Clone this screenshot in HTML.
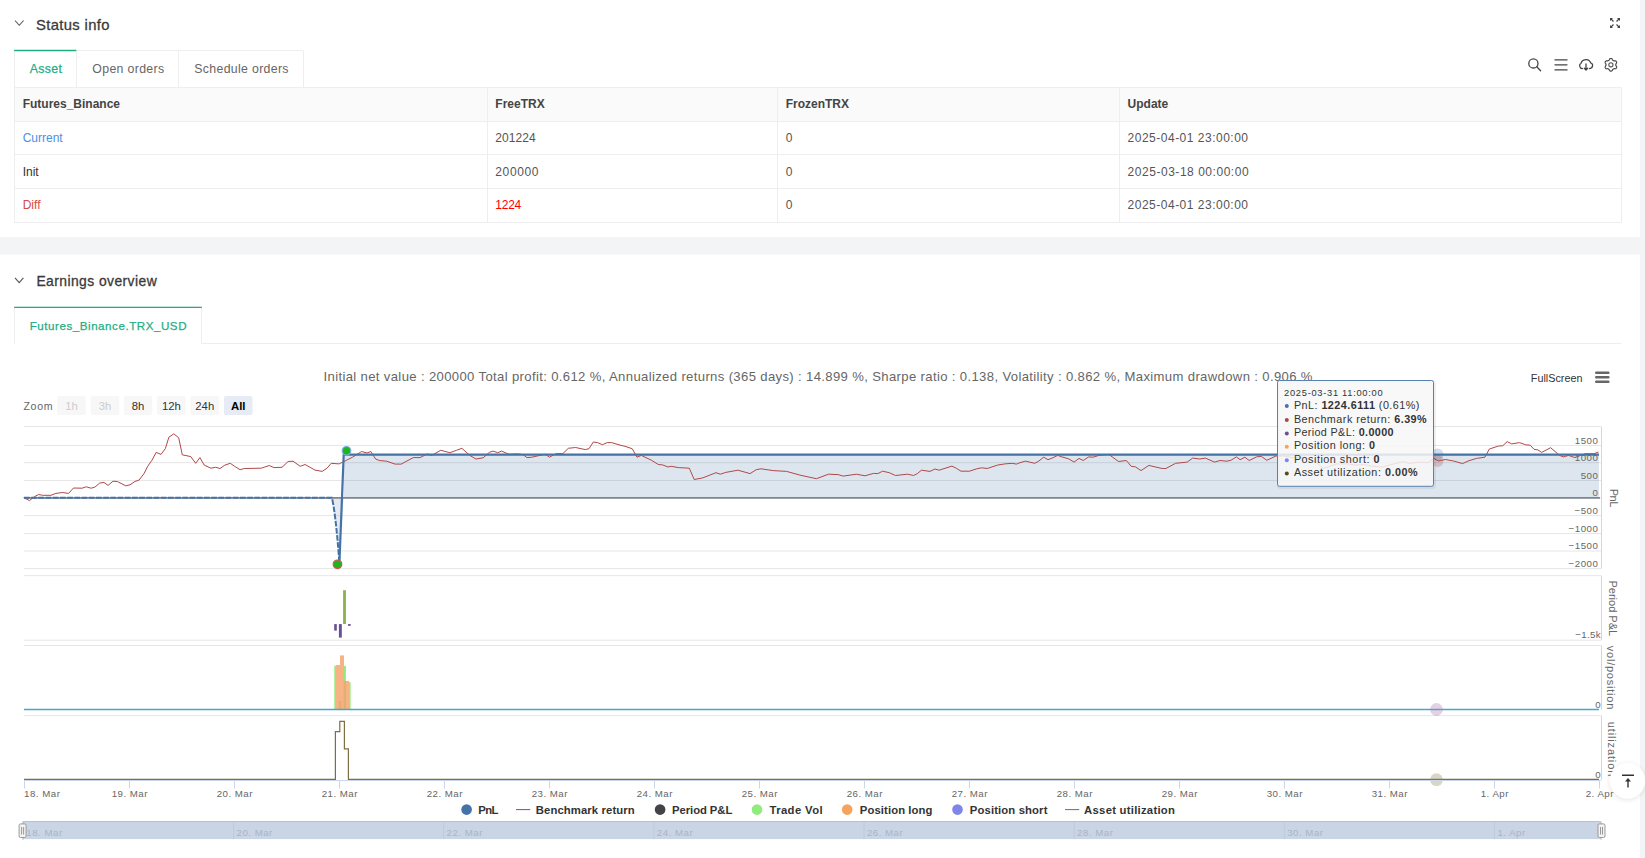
<!DOCTYPE html>
<html><head><meta charset="utf-8"><title>Status info</title>
<style>html,body{margin:0;padding:0;background:#fff;overflow:hidden} svg{display:block;font-family:"Liberation Sans", sans-serif}</style></head>
<body><svg width="1645" height="858" viewBox="0 0 1645 858">
<defs><filter id="sh" x="-50%" y="-50%" width="200%" height="200%"><feDropShadow dx="0" dy="1" stdDeviation="2.5" flood-color="#000" flood-opacity="0.12"/></filter></defs>
<rect x="0" y="0" width="1645" height="858" fill="#fff"/>
<rect x="1640" y="0" width="5" height="858" fill="#f3f4f6"/>
<rect x="0" y="237" width="1640" height="17.5" fill="#f3f4f6"/>
<path d="M15 20.5 L19.3 25.3 L23.6 20.5" fill="none" stroke="#555" stroke-width="1.1"/>
<text x="36" y="30.1" font-size="14.8" fill="#3a3a3a" font-weight="normal" text-anchor="start" textLength="73.5" lengthAdjust="spacing" stroke="#3a3a3a" stroke-width="0.3">Status info</text>
<g stroke="#444" stroke-width="1.2" fill="none"><path d="M1610.5 18.5 L1613.5 21.5 M1619.5 18.5 L1616.5 21.5 M1610.5 27.5 L1613.5 24.5 M1619.5 27.5 L1616.5 24.5"/></g>
<g fill="#444"><path d="M1610 18 L1613 18 L1610 21Z M1620 18 L1617 18 L1620 21Z M1610 28 L1613 28 L1610 25Z M1620 28 L1617 28 L1620 25Z"/></g>
<path d="M14.5 87 V50.5 H303.5 V87 M76.5 50.5 V87 M178.5 50.5 V87" fill="none" stroke="#eeeeee" stroke-width="1"/>
<rect x="14" y="49.8" width="62.5" height="1.4" rx="0.7" fill="#1fae84"/>
<text x="29.8" y="72.7" font-size="12.3" fill="#1fae84" font-weight="normal" text-anchor="start" textLength="32" lengthAdjust="spacing" stroke="#1fae84" stroke-width="0.25">Asset</text>
<text x="92.3" y="72.7" font-size="12.3" fill="#666" font-weight="normal" text-anchor="start" textLength="71.8" lengthAdjust="spacing" >Open orders</text>
<text x="194.3" y="72.7" font-size="12.3" fill="#666" font-weight="normal" text-anchor="start" textLength="94.2" lengthAdjust="spacing" >Schedule orders</text>
<g stroke="#444" stroke-width="1.3" fill="none" stroke-linecap="round"><circle cx="1533.4" cy="63.4" r="4.6"/><path d="M1536.8 66.8 L1540.6 70.8"/><path d="M1555 59.9 H1567 M1555 64.8 H1567 M1555 69.9 H1567"/><path d="M1582.5 68.6 C1579.5 68.6 1578.6 64.5 1581 63.2 C1582 60.2 1584.5 59.6 1586.3 59.6 C1588.5 59.6 1590 61 1590.8 63 C1593.5 63.8 1593.2 68 1589.6 68.6"/><path d="M1586 64 V70 M1584.3 68.3 L1586 70 L1587.7 68.3"/></g>
<path d="M1615.75 64.80 L1615.77 65.05 L1615.81 65.32 L1615.89 65.59 L1616.02 65.89 L1616.31 66.25 L1616.58 66.65 L1616.64 67.00 L1616.62 67.35 L1616.54 67.67 L1616.40 67.97 L1616.21 68.25 L1615.96 68.48 L1615.68 68.67 L1615.34 68.80 L1614.86 68.76 L1614.40 68.69 L1614.08 68.73 L1613.80 68.80 L1613.55 68.89 L1613.33 69.00 L1613.11 69.14 L1612.91 69.31 L1612.71 69.52 L1612.52 69.77 L1612.35 70.21 L1612.14 70.64 L1611.86 70.87 L1611.55 71.03 L1611.23 71.12 L1610.90 71.15 L1610.57 71.12 L1610.25 71.03 L1609.94 70.87 L1609.66 70.64 L1609.45 70.21 L1609.28 69.77 L1609.09 69.52 L1608.89 69.31 L1608.69 69.14 L1608.48 69.00 L1608.25 68.89 L1608.00 68.80 L1607.72 68.73 L1607.40 68.69 L1606.94 68.76 L1606.46 68.80 L1606.12 68.67 L1605.84 68.48 L1605.59 68.25 L1605.40 67.97 L1605.26 67.67 L1605.18 67.35 L1605.16 67.00 L1605.22 66.65 L1605.49 66.25 L1605.78 65.89 L1605.91 65.59 L1605.99 65.32 L1606.03 65.05 L1606.05 64.80 L1606.03 64.55 L1605.99 64.28 L1605.91 64.01 L1605.78 63.71 L1605.49 63.35 L1605.22 62.95 L1605.16 62.60 L1605.18 62.25 L1605.26 61.93 L1605.40 61.62 L1605.59 61.35 L1605.84 61.12 L1606.12 60.93 L1606.46 60.80 L1606.94 60.84 L1607.40 60.91 L1607.72 60.87 L1608.00 60.80 L1608.25 60.71 L1608.48 60.60 L1608.69 60.46 L1608.89 60.29 L1609.09 60.08 L1609.28 59.83 L1609.45 59.39 L1609.66 58.96 L1609.94 58.73 L1610.25 58.57 L1610.57 58.48 L1610.90 58.45 L1611.23 58.48 L1611.55 58.57 L1611.86 58.73 L1612.14 58.96 L1612.35 59.39 L1612.52 59.83 L1612.71 60.08 L1612.91 60.29 L1613.11 60.46 L1613.33 60.60 L1613.55 60.71 L1613.80 60.80 L1614.08 60.87 L1614.40 60.91 L1614.86 60.84 L1615.34 60.80 L1615.68 60.93 L1615.96 61.12 L1616.21 61.35 L1616.40 61.62 L1616.54 61.93 L1616.62 62.25 L1616.64 62.60 L1616.58 62.95 L1616.31 63.35 L1616.02 63.71 L1615.89 64.01 L1615.81 64.28 L1615.77 64.55Z" fill="none" stroke="#444" stroke-width="1.15" stroke-linejoin="round"/>
<circle cx="1610.9" cy="64.8" r="2.1" fill="none" stroke="#555" stroke-width="1.1"/>
<rect x="14.5" y="87.5" width="1607" height="34" fill="#fafafa"/>
<g stroke="#eeeeee" stroke-width="1" fill="none"><rect x="14.5" y="87.5" width="1607" height="135"/><path d="M14.5 121.5 H1621.5 M14.5 154.5 H1621.5 M14.5 188.5 H1621.5 M487.5 87.5 V222.5 M777.5 87.5 V222.5 M1119.5 87.5 V222.5"/></g>
<text x="22.7" y="108.2" font-size="12" fill="#444" font-weight="bold" text-anchor="start" >Futures_Binance</text>
<text x="495.3" y="108.2" font-size="12" fill="#444" font-weight="bold" text-anchor="start" >FreeTRX</text>
<text x="785.7" y="108.2" font-size="12" fill="#444" font-weight="bold" text-anchor="start" >FrozenTRX</text>
<text x="1127.6" y="108.2" font-size="12" fill="#444" font-weight="bold" text-anchor="start" >Update</text>
<text x="22.7" y="142.2" font-size="12" fill="#4a90e2" font-weight="normal" text-anchor="start" >Current</text>
<text x="495.3" y="142.2" font-size="12" fill="#555" font-weight="normal" text-anchor="start" textLength="40.4" lengthAdjust="spacing" >201224</text>
<text x="785.7" y="142.2" font-size="12" fill="#555" font-weight="normal" text-anchor="start" >0</text>
<text x="1127.6" y="142.2" font-size="12" fill="#555" font-weight="normal" text-anchor="start" textLength="120.4" lengthAdjust="spacing" >2025-04-01 23:00:00</text>
<text x="22.7" y="175.8" font-size="12" fill="#333" font-weight="normal" text-anchor="start" >Init</text>
<text x="495.3" y="175.8" font-size="12" fill="#555" font-weight="normal" text-anchor="start" textLength="43.2" lengthAdjust="spacing" >200000</text>
<text x="785.7" y="175.8" font-size="12" fill="#555" font-weight="normal" text-anchor="start" >0</text>
<text x="1127.6" y="175.8" font-size="12" fill="#555" font-weight="normal" text-anchor="start" textLength="121.0" lengthAdjust="spacing" >2025-03-18 00:00:00</text>
<text x="22.7" y="208.9" font-size="12" fill="#d64b40" font-weight="normal" text-anchor="start" >Diff</text>
<text x="495.3" y="208.9" font-size="12" fill="#ff0000" font-weight="normal" text-anchor="start" textLength="26.0" lengthAdjust="spacing" >1224</text>
<text x="785.7" y="208.9" font-size="12" fill="#555" font-weight="normal" text-anchor="start" >0</text>
<text x="1127.6" y="208.9" font-size="12" fill="#555" font-weight="normal" text-anchor="start" textLength="120.4" lengthAdjust="spacing" >2025-04-01 23:00:00</text>
<path d="M15 277.8 L19.2 282.6 L23.4 277.8" fill="none" stroke="#555" stroke-width="1.1"/>
<text x="36.4" y="285.7" font-size="13.9" fill="#3a3a3a" font-weight="normal" text-anchor="start" textLength="120.3" lengthAdjust="spacing" stroke="#3a3a3a" stroke-width="0.3">Earnings overview</text>
<path d="M14.5 343.5 V307 H201.5 V343.5" fill="none" stroke="#eeeeee"/>
<path d="M201.5 343.5 H1621.5" fill="none" stroke="#eeeeee"/>
<rect x="14" y="306.7" width="188" height="1.4" rx="0.7" fill="#1fae84"/>
<text x="29.7" y="329.5" font-size="11.6" fill="#1fae84" font-weight="normal" text-anchor="start" textLength="156.8" lengthAdjust="spacing" stroke="#1fae84" stroke-width="0.25">Futures_Binance.TRX_USD</text>
<text x="818" y="381.2" font-size="13.1" fill="#666" font-weight="normal" text-anchor="middle" textLength="989" lengthAdjust="spacing" >Initial net value : 200000 Total profit: 0.612 %, Annualized returns (365 days) : 14.899 %, Sharpe ratio : 0.138, Volatility : 0.862 %, Maximum drawdown : 0.906 %</text>
<text x="1530.8" y="381.9" font-size="10.8" fill="#333" font-weight="normal" text-anchor="start" >FullScreen</text>
<path d="M1596.2 372.8 H1608.4 M1596.2 377.3 H1608.4 M1596.2 381.7 H1608.4" stroke="#666" stroke-width="2.4" stroke-linecap="round"/>
<text x="23.4" y="409.8" font-size="10.6" fill="#666" font-weight="normal" text-anchor="start" textLength="29.2" lengthAdjust="spacing" >Zoom</text>
<rect x="57.2" y="396" width="28.5" height="19" rx="2" fill="#f7f7f7"/>
<text x="71.45" y="409.8" font-size="11.3" fill="#ccc" font-weight="normal" text-anchor="middle" >1h</text>
<rect x="90.7" y="396" width="28.5" height="19" rx="2" fill="#f7f7f7"/>
<text x="104.95" y="409.8" font-size="11.3" fill="#ccc" font-weight="normal" text-anchor="middle" >3h</text>
<rect x="123.8" y="396" width="28.5" height="19" rx="2" fill="#f7f7f7"/>
<text x="138.05" y="409.8" font-size="11.3" fill="#333" font-weight="normal" text-anchor="middle" >8h</text>
<rect x="157.1" y="396" width="28.5" height="19" rx="2" fill="#f7f7f7"/>
<text x="171.35" y="409.8" font-size="11.3" fill="#333" font-weight="normal" text-anchor="middle" >12h</text>
<rect x="190.5" y="396" width="28.5" height="19" rx="2" fill="#f7f7f7"/>
<text x="204.75" y="409.8" font-size="11.3" fill="#333" font-weight="normal" text-anchor="middle" >24h</text>
<rect x="224" y="396" width="28.5" height="19" rx="2" fill="#e6ebf5"/>
<text x="238.25" y="409.8" font-size="11.3" fill="#000" font-weight="bold" text-anchor="middle" >All</text>
<path d="M24 426.5 H1601" stroke="#e6e6e6" stroke-width="1"/>
<path d="M24 445.5 H1601" stroke="#e6e6e6" stroke-width="1"/>
<path d="M24 462.7 H1601" stroke="#e6e6e6" stroke-width="1"/>
<path d="M24 480.5 H1601" stroke="#e6e6e6" stroke-width="1"/>
<path d="M24 497.8 H1601" stroke="#e6e6e6" stroke-width="1"/>
<path d="M24 515.6 H1601" stroke="#e6e6e6" stroke-width="1"/>
<path d="M24 533.6 H1601" stroke="#e6e6e6" stroke-width="1"/>
<path d="M24 551.0 H1601" stroke="#e6e6e6" stroke-width="1"/>
<path d="M24 568.6 H1601" stroke="#e6e6e6" stroke-width="1"/>
<path d="M24 575.7 H1601" stroke="#e6e6e6" stroke-width="1"/>
<path d="M24 640.2 H1601" stroke="#e6e6e6" stroke-width="1"/>
<path d="M24 645.5 H1601" stroke="#e6e6e6" stroke-width="1"/>
<path d="M24 715.6 H1601" stroke="#e6e6e6" stroke-width="1"/>
<path d="M1601.5 426.8 V568.5" stroke="#ccd6eb" stroke-width="1"/>
<path d="M1601.5 575.7 V640.2" stroke="#ccd6eb" stroke-width="1"/>
<path d="M1601.5 645.5 V709.5" stroke="#ccd6eb" stroke-width="1"/>
<path d="M1601.5 715.6 V779.6" stroke="#ccd6eb" stroke-width="1"/>
<path d="M343.7 497.8 L343.7 454.6 L1599 454.6 L1599 497.8 Z" fill="#4572a7" fill-opacity="0.18"/>
<path d="M331.8 497.8 C334 505 337 530 339.2 560.7 L343.7 497.8 Z" fill="#4572a7" fill-opacity="0.15"/>
<path d="M24 497.90000000000003 H1600" stroke="#7f8690" stroke-width="1.7"/>
<path d="M23.6 497.7 L29.5 500.6 L34.6 496.5 L38.8 494.5 L42.5 495.3 L51.0 495.3 L55.9 493.4 L62.6 492.5 L68.6 493.4 L73.5 488.0 L82.0 488.2 L86.3 486.8 L91.1 488.2 L94.8 487.2 L99.6 483.1 L103.9 482.4 L108.1 485.4 L113.0 481.2 L117.3 481.5 L125.8 485.8 L130.0 484.8 L134.9 481.5 L139.1 480.1 L144.0 473.6 L147.7 466.3 L151.9 460.3 L156.2 452.4 L161.0 454.4 L165.3 448.7 L168.9 437.2 L173.8 433.8 L178.7 437.8 L182.3 454.8 L190.8 456.6 L195.7 463.3 L199.9 457.6 L204.2 465.1 L210.9 468.2 L215.7 467.3 L220.0 468.5 L224.9 465.1 L230.3 463.3 L234.6 466.3 L240.1 469.7 L244.3 468.5 L261.3 468.2 L269.2 465.5 L274.1 467.6 L282.0 467.3 L288.1 461.5 L293.0 461.2 L300.2 466.3 L305.1 464.5 L314.8 470.0 L322.1 471.4 L327.0 468.2 L331.2 463.3 L339.1 463.9 L346.4 460.3 L352.5 457.2 L361.6 451.5 L367.1 453.0 L370.8 451.5 L375.6 459.0 L379.3 460.5 L386.6 461.2 L395.1 464.1 L401.2 464.1 L413.3 457.6 L420.0 457.6 L427.3 453.9 L431.6 455.4 L440.7 450.3 L449.8 452.7 L456.5 450.3 L461.9 448.3 L469.8 455.4 L475.9 459.0 L483.2 457.8 L489.3 452.4 L493.0 451.1 L497.8 452.7 L501.5 451.1 L508.8 454.2 L518.5 453.9 L523.3 454.8 L527.0 457.6 L531.9 457.2 L545.2 454.2 L549.5 457.2 L556.2 453.6 L562.9 453.6 L568.3 448.3 L575.6 447.5 L585.3 449.6 L589.0 448.7 L593.3 442.0 L597.5 442.6 L602.4 444.7 L607.2 442.6 L611.5 442.6 L620.0 445.1 L624.9 446.3 L632.2 448.7 L637.0 457.2 L641.3 455.4 L651.6 460.3 L658.3 464.5 L662.6 464.9 L668.0 467.0 L671.1 466.3 L678.4 467.6 L689.3 468.2 L694.2 479.5 L702.7 477.9 L716.0 472.7 L720.3 474.2 L725.8 472.4 L737.9 470.2 L750.1 473.6 L756.2 469.7 L761.0 468.8 L773.2 470.6 L786.6 471.4 L799.9 475.1 L816.4 478.7 L820.0 477.4 L828.5 474.2 L838.2 474.6 L843.1 476.1 L856.5 474.2 L865.0 475.8 L873.5 473.4 L877.8 473.6 L882.6 471.2 L889.3 472.7 L895.4 475.5 L907.5 474.2 L913.6 475.5 L917.3 473.6 L921.5 470.2 L930.0 471.4 L934.9 469.0 L939.1 470.2 L951.9 466.1 L956.2 468.2 L961.0 471.2 L969.5 471.2 L976.8 468.8 L981.7 467.8 L987.2 468.5 L997.5 465.1 L1004.8 463.9 L1012.1 463.3 L1016.4 464.1 L1020.0 462.7 L1025.5 461.1 L1034.6 463.3 L1038.2 461.5 L1043.7 457.2 L1048.0 459.7 L1052.8 457.8 L1057.7 455.4 L1061.9 456.9 L1068.6 458.8 L1074.1 462.1 L1079.0 458.4 L1083.2 460.5 L1088.7 456.9 L1092.9 457.2 L1099.0 455.4 L1108.8 454.4 L1118.5 461.5 L1126.4 460.5 L1131.2 466.3 L1135.5 466.9 L1141.0 470.6 L1148.9 465.4 L1155.0 466.9 L1162.2 468.5 L1165.9 468.5 L1175.6 463.3 L1187.2 462.1 L1192.6 458.1 L1199.9 459.0 L1205.4 458.1 L1214.5 462.1 L1220.0 460.5 L1226.7 461.2 L1230.9 460.3 L1236.4 456.9 L1240.1 459.7 L1244.9 457.2 L1249.2 460.5 L1256.5 456.9 L1261.3 456.4 L1266.8 460.3 L1275.9 456.0 L1284.4 456.0 L1293.0 457.8 L1305.1 457.6 L1314.8 461.5 L1323.3 468.2 L1328.2 467.0 L1336.7 463.9 L1347.7 463.9 L1356.2 465.1 L1363.5 464.5 L1373.2 466.3 L1382.9 467.0 L1393.9 463.9 L1402.4 461.7 L1409.7 463.3 L1420.0 462.1 L1428.1 462.7 L1433.8 458.4 L1438.3 461.0 L1445.3 459.5 L1453.6 461.0 L1462.6 463.6 L1468.9 460.7 L1476.6 458.4 L1484.9 457.2 L1489.4 449.0 L1498.3 446.1 L1502.8 445.7 L1507.2 441.6 L1511.7 443.9 L1519.4 442.6 L1525.7 444.8 L1530.2 445.2 L1534.0 449.3 L1537.9 449.9 L1541.7 452.4 L1550.6 447.7 L1559.6 455.4 L1563.4 456.9 L1568.5 455.4 L1574.9 457.6 L1585.1 453.7 L1594.0 453.7 L1598.5 452.1" fill="none" stroke="#b04848" stroke-width="1" stroke-linejoin="round"/>
<path d="M24 497.8 H331.8 C334 505 337 530 339.2 560.7" fill="none" stroke="#4572a7" stroke-width="2" stroke-dasharray="5.7 1.5"/>
<path d="M339.5 560.7 L343.7 454.6 H1599" fill="none" stroke="#4572a7" stroke-width="2.2" stroke-linejoin="round"/>
<circle cx="337.5" cy="564.3" r="4.3" fill="#1fb51f" stroke="#e05050" stroke-width="1.2"/>
<circle cx="346.5" cy="450.8" r="4.3" fill="#1fb51f" stroke="#7db0e0" stroke-width="1.2"/>
<circle cx="1437.5" cy="454.6" r="6" fill="#4572a7" fill-opacity="0.25"/>
<circle cx="1437.5" cy="461" r="6" fill="#aa4643" fill-opacity="0.25"/>
<text x="1598.5" y="443.6" font-size="9.7" fill="#666" font-weight="normal" text-anchor="end" letter-spacing="0.55">1500</text>
<text x="1598.5" y="460.8" font-size="9.7" fill="#666" font-weight="normal" text-anchor="end" letter-spacing="0.55">1000</text>
<text x="1598.5" y="478.6" font-size="9.7" fill="#666" font-weight="normal" text-anchor="end" letter-spacing="0.55">500</text>
<text x="1598.5" y="495.9" font-size="9.7" fill="#666" font-weight="normal" text-anchor="end" letter-spacing="0.55">0</text>
<text x="1598.5" y="513.7" font-size="9.7" fill="#666" font-weight="normal" text-anchor="end" letter-spacing="0.55">−500</text>
<text x="1598.5" y="531.7" font-size="9.7" fill="#666" font-weight="normal" text-anchor="end" letter-spacing="0.55">−1000</text>
<text x="1598.5" y="549.1" font-size="9.7" fill="#666" font-weight="normal" text-anchor="end" letter-spacing="0.55">−1500</text>
<text x="1598.5" y="566.7" font-size="9.7" fill="#666" font-weight="normal" text-anchor="end" letter-spacing="0.55">−2000</text>
<text x="1601.1" y="637.7" font-size="9.7" fill="#666" font-weight="normal" text-anchor="end" letter-spacing="0.4">−1.5k</text>
<text x="1601.1" y="708" font-size="9.7" fill="#666" font-weight="normal" text-anchor="end" letter-spacing="0.55">0</text>
<text x="1601.1" y="778" font-size="9.7" fill="#666" font-weight="normal" text-anchor="end" letter-spacing="0.55">0</text>
<text x="0" y="0" font-size="11" fill="#666" text-anchor="middle" dominant-baseline="central" textLength="18.5" lengthAdjust="spacing" transform="translate(1614,498) rotate(90)">PnL</text>
<text x="0" y="0" font-size="11" fill="#666" text-anchor="middle" dominant-baseline="central" textLength="55.6" lengthAdjust="spacing" transform="translate(1613.4,608.3) rotate(90)">Period P&amp;L</text>
<text x="0" y="0" font-size="11" fill="#666" text-anchor="middle" dominant-baseline="central" textLength="63.5" lengthAdjust="spacing" transform="translate(1611,677.5) rotate(90)">vol/position</text>
<text x="0" y="0" font-size="11" fill="#666" text-anchor="middle" dominant-baseline="central" textLength="54.5" lengthAdjust="spacing" transform="translate(1612,749) rotate(90)">utilization</text>
<rect x="343.1" y="590.2" width="2.8" height="33.8" fill="#8db04f"/>
<rect x="334.2" y="624.1" width="2.6" height="6.5" fill="#6a4f94"/>
<rect x="338.9" y="624.1" width="2.9" height="13.5" fill="#6a4f94"/>
<rect x="348" y="624.1" width="2.7" height="1.7" fill="#6a4f94"/>
<rect x="334.3" y="665.8" width="11.6" height="43.7" fill="#90ed7d"/>
<rect x="345.9" y="682.1" width="4.7" height="27.4" fill="#90ed7d"/>
<rect x="335.9" y="665" width="4.1" height="44.5" fill="#f7b383"/>
<rect x="340" y="655.4" width="4" height="54.1" fill="#f7b383"/>
<rect x="344" y="680.9" width="5" height="28.6" fill="#f7b383"/>
<rect x="338.9" y="700.9" width="2.5" height="8.6" fill="#dfb070"/>
<rect x="343.7" y="680.9" width="2.3" height="28.6" fill="#dfb070"/>
<path d="M24 709.5 H1599" stroke="#4aa3d8" stroke-width="1.5"/>
<circle cx="1436.5" cy="709.5" r="6.4" fill="#b07fb0" fill-opacity="0.35"/>
<path d="M24 779.3 H335.4 V731.6 H339.8 V721.3 H344.4 V748.8 H348.4 V779.3 H1599" fill="none" stroke="#7d6f3f" stroke-width="1.2"/>
<circle cx="1436.5" cy="779.7" r="6.4" fill="#8f8a5f" fill-opacity="0.35"/>
<path d="M24 780.5 H1601" stroke="#ccd6eb" stroke-width="1"/>
<path d="M24.5 780.5 V788.5" stroke="#ccd6eb" stroke-width="1"/>
<text x="24.1" y="797" font-size="9.7" fill="#666" font-weight="normal" text-anchor="start" letter-spacing="0.5">18. Mar</text>
<path d="M129.5 780.5 V788.5" stroke="#ccd6eb" stroke-width="1"/>
<text x="129.8" y="797" font-size="9.7" fill="#666" font-weight="normal" text-anchor="middle" letter-spacing="0.5">19. Mar</text>
<path d="M234.5 780.5 V788.5" stroke="#ccd6eb" stroke-width="1"/>
<text x="234.8" y="797" font-size="9.7" fill="#666" font-weight="normal" text-anchor="middle" letter-spacing="0.5">20. Mar</text>
<path d="M339.5 780.5 V788.5" stroke="#ccd6eb" stroke-width="1"/>
<text x="339.8" y="797" font-size="9.7" fill="#666" font-weight="normal" text-anchor="middle" letter-spacing="0.5">21. Mar</text>
<path d="M444.5 780.5 V788.5" stroke="#ccd6eb" stroke-width="1"/>
<text x="444.8" y="797" font-size="9.7" fill="#666" font-weight="normal" text-anchor="middle" letter-spacing="0.5">22. Mar</text>
<path d="M549.5 780.5 V788.5" stroke="#ccd6eb" stroke-width="1"/>
<text x="549.8" y="797" font-size="9.7" fill="#666" font-weight="normal" text-anchor="middle" letter-spacing="0.5">23. Mar</text>
<path d="M654.5 780.5 V788.5" stroke="#ccd6eb" stroke-width="1"/>
<text x="654.8" y="797" font-size="9.7" fill="#666" font-weight="normal" text-anchor="middle" letter-spacing="0.5">24. Mar</text>
<path d="M759.5 780.5 V788.5" stroke="#ccd6eb" stroke-width="1"/>
<text x="759.8" y="797" font-size="9.7" fill="#666" font-weight="normal" text-anchor="middle" letter-spacing="0.5">25. Mar</text>
<path d="M864.5 780.5 V788.5" stroke="#ccd6eb" stroke-width="1"/>
<text x="864.8" y="797" font-size="9.7" fill="#666" font-weight="normal" text-anchor="middle" letter-spacing="0.5">26. Mar</text>
<path d="M969.5 780.5 V788.5" stroke="#ccd6eb" stroke-width="1"/>
<text x="969.8" y="797" font-size="9.7" fill="#666" font-weight="normal" text-anchor="middle" letter-spacing="0.5">27. Mar</text>
<path d="M1074.5 780.5 V788.5" stroke="#ccd6eb" stroke-width="1"/>
<text x="1074.8" y="797" font-size="9.7" fill="#666" font-weight="normal" text-anchor="middle" letter-spacing="0.5">28. Mar</text>
<path d="M1179.5 780.5 V788.5" stroke="#ccd6eb" stroke-width="1"/>
<text x="1179.8" y="797" font-size="9.7" fill="#666" font-weight="normal" text-anchor="middle" letter-spacing="0.5">29. Mar</text>
<path d="M1284.5 780.5 V788.5" stroke="#ccd6eb" stroke-width="1"/>
<text x="1284.8" y="797" font-size="9.7" fill="#666" font-weight="normal" text-anchor="middle" letter-spacing="0.5">30. Mar</text>
<path d="M1389.5 780.5 V788.5" stroke="#ccd6eb" stroke-width="1"/>
<text x="1389.8" y="797" font-size="9.7" fill="#666" font-weight="normal" text-anchor="middle" letter-spacing="0.5">31. Mar</text>
<path d="M1494.5 780.5 V788.5" stroke="#ccd6eb" stroke-width="1"/>
<text x="1494.8" y="797" font-size="9.7" fill="#666" font-weight="normal" text-anchor="middle" letter-spacing="0.5">1. Apr</text>
<path d="M1599.5 780.5 V788.5" stroke="#ccd6eb" stroke-width="1"/>
<text x="1599.8" y="797" font-size="9.7" fill="#666" font-weight="normal" text-anchor="middle" letter-spacing="0.5">2. Apr</text>
<circle cx="466.6" cy="809.6" r="5.3" fill="#4572a7"/>
<text x="478.3" y="813.8" font-size="11.3" fill="#333" font-weight="bold" text-anchor="start" textLength="20" lengthAdjust="spacing" >PnL</text>
<path d="M516 809.6 H530.2" stroke="#aa4643" stroke-width="1"/>
<text x="535.7" y="813.8" font-size="11.3" fill="#333" font-weight="bold" text-anchor="start" textLength="99" lengthAdjust="spacing" >Benchmark return</text>
<circle cx="660.1" cy="809.6" r="5.3" fill="#434348"/>
<text x="672.1" y="813.8" font-size="11.3" fill="#333" font-weight="bold" text-anchor="start" textLength="60.2" lengthAdjust="spacing" >Period P&amp;L</text>
<circle cx="757" cy="809.6" r="5.3" fill="#90ed7d"/>
<text x="769.5" y="813.8" font-size="11.3" fill="#333" font-weight="bold" text-anchor="start" textLength="53.1" lengthAdjust="spacing" >Trade Vol</text>
<circle cx="847.2" cy="809.6" r="5.3" fill="#f7a35c"/>
<text x="859.8" y="813.8" font-size="11.3" fill="#333" font-weight="bold" text-anchor="start" textLength="72.7" lengthAdjust="spacing" >Position long</text>
<circle cx="957.5" cy="809.6" r="5.3" fill="#8085e9"/>
<text x="969.8" y="813.8" font-size="11.3" fill="#333" font-weight="bold" text-anchor="start" textLength="77.6" lengthAdjust="spacing" >Position short</text>
<path d="M1065 809.6 H1079.2" stroke="#7d6f3f" stroke-width="1"/>
<text x="1084.1" y="813.8" font-size="11.3" fill="#333" font-weight="bold" text-anchor="start" textLength="90.8" lengthAdjust="spacing" >Asset utilization</text>
<rect x="22.9" y="821.4" width="1578.1" height="17.7" fill="#c9d5e4"/>
<path d="M23.4 821.4 V839.1" stroke="#bccadb" stroke-width="1"/>
<text x="26.3" y="835.7" font-size="9.7" fill="#aab4c4" font-weight="normal" text-anchor="start" letter-spacing="0.5">18. Mar</text>
<path d="M233.6 821.4 V839.1" stroke="#bccadb" stroke-width="1"/>
<text x="236.5" y="835.7" font-size="9.7" fill="#aab4c4" font-weight="normal" text-anchor="start" letter-spacing="0.5">20. Mar</text>
<path d="M443.7 821.4 V839.1" stroke="#bccadb" stroke-width="1"/>
<text x="446.6" y="835.7" font-size="9.7" fill="#aab4c4" font-weight="normal" text-anchor="start" letter-spacing="0.5">22. Mar</text>
<path d="M653.9 821.4 V839.1" stroke="#bccadb" stroke-width="1"/>
<text x="656.8" y="835.7" font-size="9.7" fill="#aab4c4" font-weight="normal" text-anchor="start" letter-spacing="0.5">24. Mar</text>
<path d="M864.0 821.4 V839.1" stroke="#bccadb" stroke-width="1"/>
<text x="866.9" y="835.7" font-size="9.7" fill="#aab4c4" font-weight="normal" text-anchor="start" letter-spacing="0.5">26. Mar</text>
<path d="M1074.2 821.4 V839.1" stroke="#bccadb" stroke-width="1"/>
<text x="1077.1" y="835.7" font-size="9.7" fill="#aab4c4" font-weight="normal" text-anchor="start" letter-spacing="0.5">28. Mar</text>
<path d="M1284.3 821.4 V839.1" stroke="#bccadb" stroke-width="1"/>
<text x="1287.2" y="835.7" font-size="9.7" fill="#aab4c4" font-weight="normal" text-anchor="start" letter-spacing="0.5">30. Mar</text>
<path d="M1494.5 821.4 V839.1" stroke="#bccadb" stroke-width="1"/>
<text x="1497.4" y="835.7" font-size="9.7" fill="#aab4c4" font-weight="normal" text-anchor="start" letter-spacing="0.5">1. Apr</text>
<path d="M22.9 840 V821.5 H1601 V840" fill="none" stroke="#b8c2ce" stroke-width="1"/>
<rect x="19.1" y="823.9" width="7" height="13.6" rx="1.5" fill="#f2f2f2" stroke="#999" stroke-width="1"/>
<path d="M21.6 827 V834.5 M23.6 827 V834.5" stroke="#999" stroke-width="1"/>
<rect x="1598.0" y="823.9" width="7" height="13.6" rx="1.5" fill="#f2f2f2" stroke="#999" stroke-width="1"/>
<path d="M1600.5 827 V834.5 M1602.5 827 V834.5" stroke="#999" stroke-width="1"/>
<rect x="1278.5" y="381.5" width="156" height="106" rx="2" fill="none" stroke="#000" stroke-opacity="0.06" stroke-width="3"/>
<rect x="1277.5" y="380.5" width="156" height="105.8" rx="2" fill="#f7f7f7" fill-opacity="0.85" stroke="#5a80b0" stroke-width="1"/>
<text x="1284.1" y="396" font-size="9.3" fill="#333" font-weight="normal" text-anchor="start" textLength="98.5" lengthAdjust="spacing" >2025-03-31 11:00:00</text>
<circle cx="1286.8" cy="405.9" r="2" fill="#4572a7"/>
<text x="1293.9" y="408.5" font-size="10.8" fill="#333" font-weight="normal" text-anchor="start" textLength="125.5" lengthAdjust="spacing" >PnL: <tspan font-weight="bold">1224.6111</tspan> (0.61%)</text>
<circle cx="1286.8" cy="420.0" r="2" fill="#aa4643"/>
<text x="1293.9" y="422.6" font-size="10.8" fill="#333" font-weight="normal" text-anchor="start" textLength="132.8" lengthAdjust="spacing" >Benchmark return: <tspan font-weight="bold">6.39%</tspan></text>
<circle cx="1286.8" cy="433.4" r="2" fill="#6a4f94"/>
<text x="1293.9" y="436.0" font-size="10.8" fill="#333" font-weight="normal" text-anchor="start" textLength="99.6" lengthAdjust="spacing" >Period P&amp;L: <tspan font-weight="bold">0.0000</tspan></text>
<circle cx="1286.8" cy="446.8" r="2" fill="#f7a35c"/>
<text x="1293.9" y="449.4" font-size="10.8" fill="#333" font-weight="normal" text-anchor="start" textLength="81.2" lengthAdjust="spacing" >Position long: <tspan font-weight="bold">0</tspan></text>
<circle cx="1286.8" cy="460.2" r="2" fill="#8085e9"/>
<text x="1293.9" y="462.8" font-size="10.8" fill="#333" font-weight="normal" text-anchor="start" textLength="85.5" lengthAdjust="spacing" >Position short: <tspan font-weight="bold">0</tspan></text>
<circle cx="1286.8" cy="473.6" r="2" fill="#5a4a10"/>
<text x="1293.9" y="476.2" font-size="10.8" fill="#333" font-weight="normal" text-anchor="start" textLength="123.8" lengthAdjust="spacing" >Asset utilization: <tspan font-weight="bold">0.00%</tspan></text>
<circle cx="1627.5" cy="780.8" r="17.7" fill="#fff" filter="url(#sh)"/>
<path d="M1622 775.3 H1634 M1628 779 V787.5" stroke="#333" stroke-width="1.4"/><path d="M1625 781.5 L1628 778 L1631 781.5Z" fill="#333"/>

</svg></body></html>
